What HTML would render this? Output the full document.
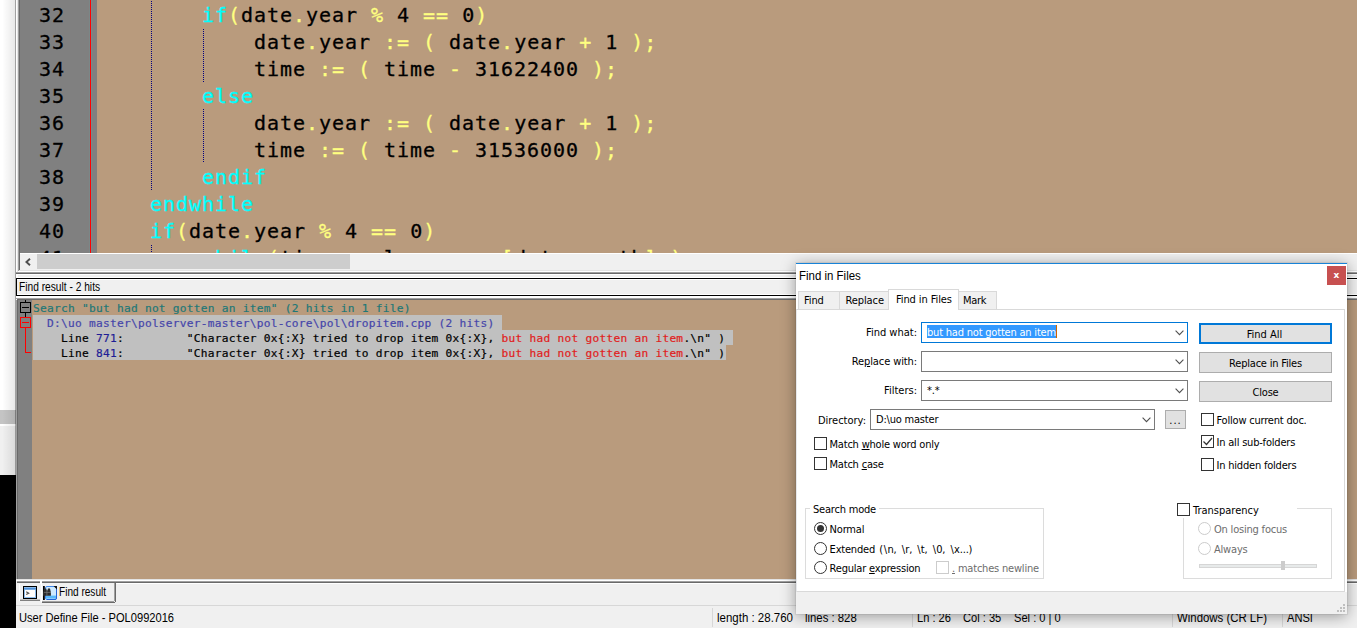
<!DOCTYPE html>
<html lang="en"><head><meta charset="utf-8"><title>Notepad++ - Find in Files</title>
<style>
*{box-sizing:border-box;margin:0;padding:0}
html,body{width:1357px;height:628px;overflow:hidden;background:#F0F0F0}
body{position:relative;font-family:"DejaVu Sans Condensed","Liberation Sans",sans-serif;font-size:11px;color:#000}
.a{position:absolute}
.t{position:absolute;white-space:pre;line-height:1}
/* editor */
#ed{position:absolute;left:0;top:0;width:1357px;height:253px;background:#B99B7D;overflow:hidden}
.cl,.ln{position:absolute;white-space:pre;font-family:"DejaVu Sans Mono","Liberation Mono",monospace;font-size:20px;line-height:27px;height:27px;letter-spacing:0.96px;-webkit-text-stroke:.3px}
.ln{left:20px;width:45px;text-align:right;color:#000}
.k{color:#00FFFF}.o{color:#FFFF80}.n{color:#000}
.ig{position:absolute;width:1px;background:repeating-linear-gradient(to bottom,#000080 0,#000080 1px,transparent 1px,transparent 2px)}
/* results */
#res{position:absolute;left:16px;top:300px;width:1341px;height:279px;background:#B99B7D;overflow:hidden}
.rl{position:absolute;left:33px;white-space:pre;font-family:"DejaVu Sans Mono","Liberation Mono",monospace;font-size:11.2px;line-height:15px;height:15px;letter-spacing:0.2576px;-webkit-text-stroke:.2px}
.sel{position:absolute;left:33px;height:15px;background:#C0C0C0}

/* frame pieces */
.hl{position:absolute;left:16px;width:1341px;height:1px}
/* left background strip */
#bgl{position:absolute;left:0;top:0;width:16px;height:628px;background:#fff;overflow:hidden}
/* scrollbar */
#hsb{position:absolute;left:20px;top:253px;width:1337px;height:17px;background:#F0F0F0;border-top:1px solid #fff}
#hsb .th{position:absolute;left:17px;top:0;width:313px;height:15px;background:#CDCDCD}
/* caption */
#cap{position:absolute;left:16px;top:278px;width:1345px;height:18px;border:1px solid #000;background:#F0F0F0;box-shadow:inset 0 1px 0 #fff}
.nar{font-family:"Liberation Sans",sans-serif;font-size:12px;transform-origin:0 50%;display:inline-block;white-space:pre}
/* bottom tab bar + status bar */
#tabbar{position:absolute;left:16px;top:579px;width:1341px;height:26px;background:#F0F0F0}
#sb{position:absolute;left:16px;top:605px;width:1341px;height:23px;background:#F0F0F0;border-top:1px solid #D7D7D7;font-family:"Liberation Sans",sans-serif;font-size:12px}
#sb .s{position:absolute;top:1px;white-space:pre;line-height:22px;transform-origin:0 50%;transform:scaleX(.926)}
#sb .dv{position:absolute;top:2px;width:1px;height:19px;background:#D7D7D7}
/* dialog */
#dlg{position:absolute;left:796px;top:263px;width:551px;height:351px;background:#fff;border-top:1px solid #1883D7;box-shadow:0 2px 14px rgba(0,0,0,.38),0 0 0 1px rgba(0,0,0,.05)}
#dlg .x{position:absolute;left:531px;top:2px;width:19px;height:19px;background:#C75050;color:#fff;text-align:center;font:bold 9px/18px "DejaVu Sans","Liberation Sans",sans-serif}
#dlg .ttl{position:absolute;left:4px;top:4px;font:12px/16px "Liberation Sans",sans-serif;white-space:pre;transform-origin:0 50%}
.tab{position:absolute;top:27px;height:20px;letter-spacing:-0.1px;background:#F0F0F0;border:1px solid #D9D9D9;line-height:18px;padding-left:5px;white-space:pre}
.tab.on{letter-spacing:-0.1px;top:25px;height:21px;background:#fff;border-bottom:0;line-height:19px;padding-left:7px;z-index:2}
#pane{position:absolute;left:0;top:45px;width:549px;height:283px;border:1px solid #D9D9D9;border-left-color:#E6E8EC;background:#fff}
#dfoot{position:absolute;left:0;top:328px;width:551px;height:22px;background:#F0F0F0}
.lb{position:absolute;white-space:pre;line-height:13px;height:13px;letter-spacing:-0.2px}
.lb.r{text-align:right;letter-spacing:0}
.dis{color:#6D6D6D}
.cb{position:absolute;height:21px;border:1px solid #7A7A7A;background:#fff}
.cb.f{border-color:#0078D7}
.cb .v{position:absolute;left:5px;top:3px;line-height:13px;white-space:pre;letter-spacing:-0.2px}
.cb svg{position:absolute;right:3px;top:7px}
.btn{position:absolute;width:133px;height:21px;background:#E1E1E1;border:1px solid #ADADAD;text-align:center;line-height:21px;white-space:pre;letter-spacing:-0.2px}
.btn.def{border:2px solid #0078D7;line-height:19px;letter-spacing:0;text-indent:-2px}
.ck{position:absolute;width:13px;height:13px;border:1px solid #333;background:#fff}
.ck.d{border-color:#CCC}
.rd{position:absolute;width:13px;height:13px;border:1px solid #333;border-radius:50%;background:#fff}
.rd.d{border-color:#CCC}
.rd.on::after{content:"";position:absolute;left:2px;top:2px;width:7px;height:7px;border-radius:50%;background:#333}
.grp{position:absolute;border:1px solid #DCDCDC}
.u{text-decoration:underline}
.bs{font-style:normal;padding-left:1px;padding-right:.5px}
.hsel{background:#3399FF;color:#fff;display:inline-block;height:13px;line-height:13px;padding-bottom:0}
.qh{color:#1E7878}.qf{color:#4646AA}.qt{color:#000}.qd{color:#1E1E96}.qm{color:#E02020}

</style></head>
<body>
<!-- background window peeking at the left -->
<div id="bgl">
  <div class="a" style="left:0;top:410px;width:16px;height:14px;background:#C4C4C4"></div>
  <div class="a" style="left:0;top:426px;width:16px;height:49px;background:#F0F0F0"></div>
  <div class="a" style="left:0;top:475px;width:16px;height:153px;background:#000"></div>
  <div class="a" style="left:0;top:0;width:15px;height:628px;background:linear-gradient(to right,rgba(0,0,0,0) 15%,rgba(0,0,0,.09) 100%)"></div>
  <div class="a" style="left:15px;top:0;width:1px;height:628px;background:rgba(0,0,0,.37)"></div>
</div>
<div class="a" style="left:16px;top:0;width:2px;height:628px;background:#fff"></div>
<div class="a" style="left:17px;top:0;width:1px;height:272px;background:#E6E6E6"></div>

<!-- ================= editor ================= -->
<div id="ed" style="left:18px;width:1339px">
 <div class="a" style="left:-18px;top:0;width:1357px;height:253px">
  <div class="a" style="left:18px;top:0;width:1px;height:253px;background:#A0A0A0"></div>
  <div class="a" style="left:19px;top:0;width:1px;height:253px;background:#696969"></div>
  <div class="a" style="left:20px;top:0;width:70px;height:253px;background:#808080"></div>
  <div class="a" style="left:89px;top:0;width:3px;height:253px;background:#7A8888"></div>
  <div class="a" style="left:90px;top:0;width:1px;height:253px;background:#FF0000"></div>
  <div class="a" style="left:92px;top:0;width:5px;height:253px;background:#808080"></div>
  <div class="ig" style="left:151px;top:1px;height:189px"></div><div class="ig" style="left:203px;top:29px;height:53px"></div><div class="ig" style="left:203px;top:109px;height:54px"></div><div class="ig" style="left:151px;top:245px;height:8px"></div>
  <div class="ln" style="top:2px">32</div><div class="ln" style="top:29px">33</div><div class="ln" style="top:56px">34</div><div class="ln" style="top:83px">35</div><div class="ln" style="top:110px">36</div><div class="ln" style="top:137px">37</div><div class="ln" style="top:164px">38</div><div class="ln" style="top:191px">39</div><div class="ln" style="top:218px">40</div><div class="ln" style="top:245px">41</div>
  <div class="cl" style="top:2px;left:202px"><span class="k">if</span><span class="o">(</span><span class="n">date</span><span class="o">.</span><span class="n">year </span><span class="o">%</span><span class="n"> 4 </span><span class="o">==</span><span class="n"> 0</span><span class="o">)</span></div><div class="cl" style="top:29px;left:254px"><span class="n">date</span><span class="o">.</span><span class="n">year </span><span class="o">:=</span><span class="n"> </span><span class="o">(</span><span class="n"> date</span><span class="o">.</span><span class="n">year </span><span class="o">+</span><span class="n"> 1 </span><span class="o">);</span></div><div class="cl" style="top:56px;left:254px"><span class="n">time </span><span class="o">:=</span><span class="n"> </span><span class="o">(</span><span class="n"> time </span><span class="o">-</span><span class="n"> 31622400 </span><span class="o">);</span></div><div class="cl" style="top:83px;left:202px"><span class="k">else</span></div><div class="cl" style="top:110px;left:254px"><span class="n">date</span><span class="o">.</span><span class="n">year </span><span class="o">:=</span><span class="n"> </span><span class="o">(</span><span class="n"> date</span><span class="o">.</span><span class="n">year </span><span class="o">+</span><span class="n"> 1 </span><span class="o">);</span></div><div class="cl" style="top:137px;left:254px"><span class="n">time </span><span class="o">:=</span><span class="n"> </span><span class="o">(</span><span class="n"> time </span><span class="o">-</span><span class="n"> 31536000 </span><span class="o">);</span></div><div class="cl" style="top:164px;left:202px"><span class="k">endif</span></div><div class="cl" style="top:191px;left:150px"><span class="k">endwhile</span></div><div class="cl" style="top:218px;left:150px"><span class="k">if</span><span class="o">(</span><span class="n">date</span><span class="o">.</span><span class="n">year </span><span class="o">%</span><span class="n"> 4 </span><span class="o">==</span><span class="n"> 0</span><span class="o">)</span></div><div class="cl" style="top:245px;left:202px"><span class="k">while</span><span class="o">(</span><span class="n">time </span><span class="o">&gt;=</span><span class="n"> leap_mons</span><span class="o">[</span><span class="n">date</span><span class="o">.</span><span class="n">month</span><span class="o">]</span><span class="n"> </span><span class="o">)</span></div>
 </div>
</div>
<div class="a" style="left:18px;top:253px;width:1px;height:18px;background:#A0A0A0"></div>
<div class="a" style="left:19px;top:253px;width:1px;height:17px;background:#696969"></div>
<div id="hsb"><svg class="a" style="left:5px;top:4px" width="6" height="8" viewBox="0 0 6 8"><path d="M5 .7 L1.4 4 L5 7.3" fill="none" stroke="#505050" stroke-width="1.9"/></svg><div class="th"></div></div>
<div class="hl" style="top:270px;left:19px;background:#E3E3E3"></div>
<div class="hl" style="top:271px;left:18px;background:#fff"></div>
<div class="hl" style="top:272px;background:#A0A0A0"></div>
<div class="hl" style="top:273px;background:#696969"></div>
<div class="hl" style="top:274px;background:#fff"></div>
<div class="hl" style="top:277px;background:#fff"></div>
<div id="cap"><span class="nar a" style="left:2px;top:1px;line-height:14px;transform:scaleX(.85)">Find result - 2 hits</span></div>
<div class="hl" style="top:294px;left:17px;background:#fff"></div>
<div class="hl" style="top:296px;height:2px;background:#fff"></div>
<div class="hl" style="top:298px;background:#A0A0A0"></div>
<div class="hl" style="top:299px;left:17px;background:#696969"></div>

<!-- ================= find results ================= -->
<div id="res">
 <div class="a" style="left:-16px;top:0;width:1357px;height:279px">
  <div class="a" style="left:16px;top:0;width:1px;height:279px;background:#A0A0A0"></div>
  <div class="a" style="left:17px;top:0;width:1px;height:279px;background:#696969"></div>
  <div class="a" style="left:18px;top:0;width:14px;height:279px;background:#808080"></div>
  <svg class="a" style="left:18px;top:0" width="14" height="60" viewBox="0 0 14 60" shape-rendering="crispEdges">
    <path d="M7.5 0 V2 M7.5 13 V17" stroke="#000" fill="none"/>
    <rect x="2.5" y="2.5" width="10" height="10" fill="none" stroke="#000"/>
    <path d="M4 7.5 H11" stroke="#000"/>
    <rect x="2.5" y="17.5" width="10" height="10" fill="none" stroke="#F00"/>
    <path d="M4 22.5 H11" stroke="#F00"/>
    <path d="M7.5 28 V52.5 H13" stroke="#F00" fill="none"/>
  </svg>
  <div class="a" style="left:0;top:-300px;width:1357px;height:628px">
  <div class="rl" style="top:301px"><span class="qh">Search "but had not gotten an item" (2 hits in 1 file)</span></div><div class="sel" style="top:315px;width:469px"></div><div class="rl" style="top:316px"><span class="qf">  D:\uo master\polserver-master\pol-core\pol\dropitem.cpp (2 hits)</span></div><div class="sel" style="top:330px;width:700px"></div><div class="rl" style="top:331px"><span class="qt">    Line </span><span class="qd">771</span><span class="qt">:         "Character 0x{:X} tried to drop item 0x{:X}, </span><span class="qm">but had not gotten an item</span><span class="qt">.\n" )</span></div><div class="sel" style="top:345px;width:693px"></div><div class="rl" style="top:346px"><span class="qt">    Line </span><span class="qd">841</span><span class="qt">:         "Character 0x{:X} tried to drop item 0x{:X}, </span><span class="qm">but had not gotten an item</span><span class="qt">.\n" )</span></div>
  </div>
 </div>
</div>
<div class="hl" style="top:579px;background:#E3E3E3"></div>
<div class="hl" style="top:580px;background:#fff"></div>

<!-- ================= bottom tab bar ================= -->
<div id="tabbar" style="top:581px;height:24px">
  <div class="a" style="left:1px;top:0;width:1340px;height:1px;background:#A0A0A0"></div>
  <div class="a" style="left:1px;top:1px;width:1340px;height:1px;background:#696969"></div>
  <div class="a" style="left:100px;top:2px;width:1241px;height:1px;background:#fff"></div>
</div>
<div class="a" style="left:19px;top:584px;width:1px;height:17px;background:#fff"></div>
<div class="a" style="left:20px;top:599px;width:20px;height:1px;background:#C4C4C4"></div>
<div class="a" style="left:20px;top:600px;width:20px;height:1px;background:#808080"></div>
<div class="a" style="left:40px;top:581px;width:2px;height:3px;background:#fff"></div>
<div class="a" style="left:41px;top:583px;width:1px;height:19px;background:#fff"></div>
<div class="a" style="left:42px;top:601px;width:72px;height:1px;background:#A0A0A0"></div>
<div class="a" style="left:42px;top:602px;width:73px;height:1px;background:#696969"></div>
<div class="a" style="left:114px;top:583px;width:1px;height:18px;background:#A0A0A0"></div>
<div class="a" style="left:115px;top:582px;width:1px;height:20px;background:#696969"></div>
<svg class="a" style="left:23px;top:586px" width="14" height="13" viewBox="0 0 14 13"><rect x="0.5" y="0.5" width="13" height="12" fill="#fff" stroke="#000"/><rect x="1" y="1" width="12" height="11" fill="#8DBCEB"/><rect x="1" y="2" width="12" height="1.3" fill="#4F8FD6"/><rect x="2" y="4" width="10" height="7" fill="#FFFDFB"/><path d="M3.2 5.8 L5.8 7.2 L3.2 8.6" fill="none" stroke="#555" stroke-width="1.1"/></svg>
<svg class="a" style="left:43px;top:586px" width="14" height="14" viewBox="0 0 14 14"><rect x="2.5" y="0.5" width="11" height="13" rx="1.5" fill="#CDE9FF" stroke="#3F86E8"/><path d="M13.5 3 V12 Q13.5 13.5 12 13.5 H4" fill="none" stroke="#2563D6"/><rect x="3" y="9.6" width="10" height="3" fill="#58B8FA"/><path d="M10.6 0 L14 0 L14 3.4 Z" fill="#111"/><rect x="0" y="0" width="1.8" height="14" fill="#000"/><path d="M1.2 2.4 h2 l.6 2 h.6 l.6 -2 h2 l.9 4 v3.4 h-7.9 v-3.4 Z" fill="#2B2B2B"/><path d="M1 6.4 h7 M3.9 4.4 v5" stroke="#8A8A8A" stroke-width=".6" fill="none"/></svg>
<span class="nar a" style="left:59px;top:585px;line-height:14px;transform:scaleX(.84)">Find result</span>

<!-- ================= status bar ================= -->
<div id="sb">
  <span class="s" style="left:3px">User Define File - POL0992016</span>
  <div class="dv" style="left:696px"></div>
  <span class="s" style="left:701px;transform:scaleX(.957)">length : 28.760</span>
  <span class="s" style="left:789px;transform:scaleX(.945)">lines : 828</span>
  <div class="dv" style="left:896px"></div>
  <span class="s" style="left:901px">Ln : 26</span>
  <span class="s" style="left:947px">Col : 35</span>
  <span class="s" style="left:998px">Sel : 0 | 0</span>
  <div class="dv" style="left:1156px"></div>
  <span class="s" style="left:1161px;transform:scaleX(.95)">Windows (CR LF)</span>
  <div class="dv" style="left:1266px"></div>
  <span class="s" style="left:1271px">ANSI</span>
</div>

<!-- ================= Find in Files dialog ================= -->

<div id="dlg">
  <div class="ttl" style="left:3px;transform:scaleX(.955)">Find in Files</div>
  <div class="x">x</div>
  <div class="tab" style="left:2px;width:42px">Find</div>
  <div class="tab" style="left:43px;width:50px;padding-left:5.5px">Replace</div>
  <div class="tab on" style="left:92px;width:71px">Find in Files</div>
  <div class="tab" style="left:162px;width:39px;padding-left:4px;letter-spacing:-0.3px">Mark</div>
  <div id="pane"></div>
  <div id="dfoot"><svg class="a" style="right:1px;bottom:1px" width="10" height="10" viewBox="0 0 10 10"><g fill="#BFBFBF"><rect x="7" y="1" width="2" height="2"/><rect x="4" y="4" width="2" height="2"/><rect x="7" y="4" width="2" height="2"/><rect x="1" y="7" width="2" height="2"/><rect x="4" y="7" width="2" height="2"/><rect x="7" y="7" width="2" height="2"/></g></svg></div>

  <div class="lb r" style="left:1px;top:62px;width:120px">Find what:</div>
  <div class="cb f" style="left:125px;top:58px;width:267px"><div class="a" style="left:5px;top:2px;width:129px;height:13px;background:#3399FF"></div><div class="a" style="left:134px;top:2px;width:1px;height:13px;background:#CC6600"></div><div class="v" style="color:#fff">but had not gotten an item</div><svg width="9" height="6" viewBox="0 0 9 6"><path d="M0.6 0.6 L4.5 4.6 L8.4 0.6" fill="none" stroke="#505050" stroke-width="1.1"/></svg></div>
  <div class="lb r" style="left:1px;top:91px;width:120px;letter-spacing:-.1px">Re<span class="u">p</span>lace with:</div>
  <div class="cb" style="left:125px;top:87px;width:267px"><svg width="9" height="6" viewBox="0 0 9 6"><path d="M0.6 0.6 L4.5 4.6 L8.4 0.6" fill="none" stroke="#505050" stroke-width="1.1"/></svg></div>
  <div class="lb r" style="left:1px;top:120px;width:120px">Filters:</div>
  <div class="cb" style="left:125px;top:116px;width:267px"><div class="v">*.*</div><svg width="9" height="6" viewBox="0 0 9 6"><path d="M0.6 0.6 L4.5 4.6 L8.4 0.6" fill="none" stroke="#505050" stroke-width="1.1"/></svg></div>
  <div class="lb r" style="left:-50px;top:150px;width:120px">Directory:</div>
  <div class="cb" style="left:74px;top:145px;width:285px"><div class="v">D:\uo master</div><svg width="9" height="6" viewBox="0 0 9 6"><path d="M0.6 0.6 L4.5 4.6 L8.4 0.6" fill="none" stroke="#505050" stroke-width="1.1"/></svg></div>
  <div class="btn" style="left:369px;top:146px;width:21px;height:19px;line-height:20px;letter-spacing:1px;text-indent:0">...</div>

  <div class="btn def" style="left:403px;top:59px">Find All</div>
  <div class="btn" style="left:403px;top:88px">Replace in Files</div>
  <div class="btn" style="left:403px;top:117px">Close</div>

  <div class="ck" style="left:405px;top:149px"></div><div class="lb" style="left:420.5px;top:150px">Follow current doc.</div>
  <div class="ck" style="left:405px;top:171px"><svg width="11" height="11" viewBox="0 0 11 11"><path d="M1.5 5.5 L4.5 8.5 L10 2" fill="none" stroke="#333" stroke-width="1.2"/></svg></div><div class="lb" style="left:420.5px;top:172px">In all sub-folders</div>
  <div class="ck" style="left:405px;top:194px"></div><div class="lb" style="left:420.5px;top:195px">In hidden folders</div>

  <div class="ck" style="left:18px;top:173px"></div><div class="lb" style="left:33.5px;top:174px">Match <span class="u">w</span>hole word only</div>
  <div class="ck" style="left:18px;top:193px"></div><div class="lb" style="left:33.5px;top:194px">Match <span class="u">c</span>ase</div>

  <div class="grp" style="left:9px;top:244px;width:239px;height:71px"></div>
  <div class="lb" style="left:14px;top:239px;background:#fff;padding:0 3px">Search mode</div>
  <div class="rd on" style="left:18px;top:258px"></div><div class="lb" style="left:33.60000000000002px;top:259px">Normal</div>
  <div class="rd" style="left:18px;top:278px"></div><div class="lb" style="left:33.60000000000002px;top:279px;word-spacing:1.2px">Extended (<i class="bs">\</i>n, <i class="bs">\</i>r, <i class="bs">\</i>t, <i class="bs">\</i>0, <i class="bs">\</i>x...)</div>
  <div class="rd" style="left:18px;top:297px"></div><div class="lb" style="left:33.60000000000002px;top:298px">Regular <span class="u">e</span>xpression</div>
  <div class="ck d" style="left:140px;top:297px"></div><div class="lb dis" style="left:156px;top:298px"><span class="u">.</span> matches newline</div>

  <div class="grp" style="left:387px;top:244px;width:149px;height:71px"></div>
  <div class="a" style="left:380px;top:238px;width:121px;height:16px;background:#fff"></div>
  <div class="ck" style="left:381px;top:239px"></div><div class="lb" style="left:397px;top:240px;letter-spacing:0">Transparency</div>
  <div class="rd d" style="left:402px;top:258px"></div><div class="lb dis" style="left:418px;top:259px">On losing focus</div>
  <div class="rd d" style="left:402px;top:278px"></div><div class="lb dis" style="left:418px;top:279px">Always</div>
  <div class="a" style="left:403px;top:300px;width:118px;height:4px;background:#E7EAEA;border:1px solid #D6D6D6"></div>
  <div class="a" style="left:485px;top:297px;width:4px;height:9px;background:#CCCCCC"></div>
</div>

</body></html>
